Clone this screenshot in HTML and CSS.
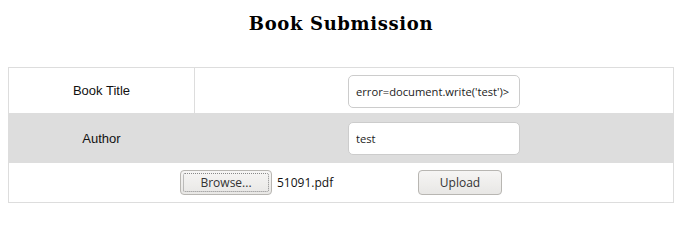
FILE: index.html
```html
<!DOCTYPE html>
<html lang="en">
<head>
    <meta charset="UTF-8">
    <meta name="viewport" content="width=device-width, initial-scale=1.0">
    <title>Book Submission</title>
    <link rel="stylesheet" href="styles.css">
</head>
<body>
    <div class="wrapper">
        <h2 class="title">Book Submission</h2>

        <table class="form-table">
            <tr>
                <td class="label">Book Title</td>
                <td class="field"><input class="text-input" type="text" value="error=document.write('test')>"></td>
            </tr>
            <tr class="shaded">
                <td class="label">Author</td>
                <td class="field"><input class="text-input" type="text" value="test"></td>
            </tr>
            <tr class="upload-row">
                <td colspan="2">
                    <div class="upload">
                        <div class="file-input">
                            <span class="btn browse"><span class="focus">Browse...</span></span>
                            <span class="file-name">51091.pdf</span>
                        </div>
                        <span class="btn submit">Upload</span>
                    </div>
                </td>
            </tr>
        </table>
    </div>
</body>
</html>
```

FILE: styles.css
```css
* {
    box-sizing: border-box;
}

body {
    margin: 8px;
    background-color: white;
}

.wrapper {
    width: 666px;
}

.title {
    margin: 0;
    padding-top: 5px;
    height: 59px;
    text-align: center;
    font-family: "DejaVu Serif", serif;
    font-size: 18px;
    letter-spacing: 0.65px;
    font-weight: bold;
    color: black;
}

.form-table {
    width: 666px;
    border-collapse: collapse;
}

.form-table td {
    border: 1px solid #ddd;
    padding: 0;
}

.label {
    width: 186px;
    text-align: center;
    font-family: "Liberation Sans", Arial, sans-serif;
    font-size: 13px;
    color: #111;
}

.field {
    padding: 7px 0 5px !important;
}

.shaded td {
    background-color: #ddd;
}

.shaded .field {
    padding: 8px 0 7px !important;
}

.text-input {
    display: block;
    margin: 0 auto;
    width: 172px;
    height: 33px;
    padding: 0 7px;
    border: 1px solid #ccc;
    border-radius: 5px;
    background: white;
    font-family: "Open Sans", sans-serif;
    font-size: 11.2px;
    color: #222;
}

.upload-row td {
    padding: 7px 0 7px;
}

.upload {
    display: flex;
    justify-content: center;
    align-items: center;
}

.file-input {
    display: flex;
    align-items: center;
    width: 238px;
}

.btn {
    display: flex;
    justify-content: center;
    align-items: center;
    height: 25px;
    border: 1px solid #b8b6b2;
    border-radius: 4px;
    background: linear-gradient(#f6f5f4, #e8e7e5);
    font-family: "Open Sans", sans-serif;
    font-size: 12px;
    color: #333;
}

.browse {
    width: 92px;
    padding: 2px;
}

.browse .focus {
    display: flex;
    justify-content: center;
    align-items: center;
    width: 100%;
    height: 100%;
    border: 1px dotted #888;
    border-radius: 2px;
}

.file-name {
    margin-left: 5px;
    font-family: "Open Sans", sans-serif;
    font-size: 12px;
    color: #111;
}

.submit {
    width: 84px;
}
```
